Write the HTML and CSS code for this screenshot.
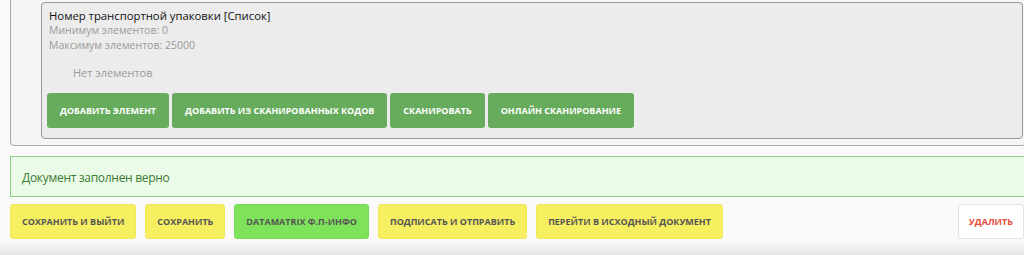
FILE: index.html
```html
<!DOCTYPE html>
<html lang="ru">
<head>
    <meta charset="UTF-8">
    <meta name="viewport" content="width=device-width, initial-scale=1.0">
    <title>Документ</title>
    <link rel="stylesheet" href="styles.css">
</head>
<body>

    <div class="page">
        <!-- List field -->
        <div class="panel">
            <div class="field-list">
                <div class="field-title">Номер транспортной упаковки [Список]</div>
                <div class="field-hint">Минимум элементов: 0</div>
                <div class="field-hint">Максимум элементов: 25000</div>
                <div class="empty">Нет элементов</div>
                <div class="list-buttons">
                    <button class="btn-green">Добавить элемент</button>
                    <button class="btn-green">Добавить из сканированных кодов</button>
                    <button class="btn-green">Сканировать</button>
                    <button class="btn-green">Онлайн сканирование</button>
                </div>
            </div>
        </div>

        <!-- Validation message -->
        <div class="alert-ok">Документ заполнен верно</div>

        <!-- Actions -->
        <div class="actions">
            <button class="btn-yellow">Сохранить и выйти</button>
            <button class="btn-yellow">Сохранить</button>
            <button class="btn-lime">Datamatrix Ф.П-Инфо</button>
            <button class="btn-yellow">Подписать и отправить</button>
            <button class="btn-yellow">Перейти в исходный документ</button>
            <button class="btn-delete">Удалить</button>
        </div>
        <div class="actions-shadow"></div>
    </div>

</body>
</html>
```

FILE: styles.css
```css
body {
    font-family: "Open Sans", Arial, sans-serif;
    margin: 0;
    padding: 0;
    background-color: #fafafa;
    overflow: hidden;
}
.page {
    padding: 0 0 0 10px;
    margin-right: -2px;
}
.panel {
    margin-top: -10px;
    padding: 11px 2px 6px 30px;
    background-color: #f5f5f5;
    border: 1px solid #a9a9a9;
    border-radius: 4px;
}
.field-list {
    padding: 5px 4px 10px 5px;
    background-color: #ececec;
    border: 1px solid #9a9a9a;
    border-radius: 4px;
}
.field-title {
    font-size: 11.3px;
    line-height: 15px;
    color: #111;
    padding-left: 2px;
}
.field-hint {
    font-size: 10.5px;
    line-height: 15px;
    color: #9a9a9a;
    padding-left: 2px;
}
.empty {
    font-size: 11px;
    color: #9a9a9a;
    padding: 12px 0 0 26px;
    line-height: 15px;
}
.list-buttons {
    display: flex;
    gap: 3px;
    margin-top: 13px;
}
button {
    font-family: "Open Sans", Arial, sans-serif;
    font-size: 9px;
    font-weight: bold;
    text-transform: uppercase;
    height: 35px;
    padding: 0 11px;
    border: none;
    border-radius: 3px;
    cursor: pointer;
}
.btn-green {
    background-color: #66ac5c;
    color: white;
    padding: 0 13px;
}
.alert-ok {
    margin-top: 10px;
    padding: 0 11px;
    height: 39px;
    line-height: 41px;
    background-color: #eafbe8;
    border: 1px solid #8fcc88;
    color: #3b7a32;
    font-size: 12px;
    letter-spacing: -0.3px;
}
.actions {
    display: flex;
    gap: 9px;
    padding-top: 7px;
    padding-right: 2px;
}
.btn-yellow {
    background-color: #f6ef60;
    border: 1px solid #efe85a;
    color: #555;
}
.btn-lime {
    background-color: #7ee35a;
    border: 1px solid #76d853;
    color: #555;
}
.btn-delete {
    margin-left: auto;
    background-color: white;
    border: 1px solid #e2e2e2;
    color: #e74c3c;
    padding: 0 10px;
}
.actions-shadow {
    height: 20px;
    margin-top: 2px;
    margin-left: -10px;
    background: linear-gradient(#fafafa, #dcdcdc);
}
```
